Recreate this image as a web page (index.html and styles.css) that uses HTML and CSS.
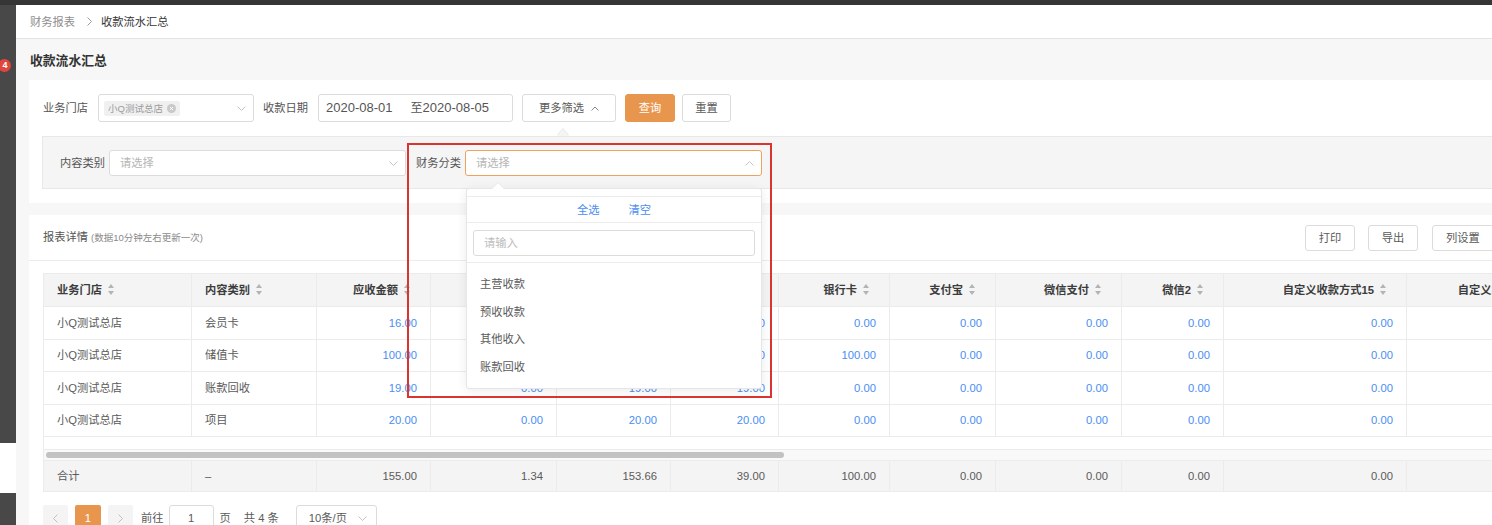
FILE: index.html
```html
<!DOCTYPE html>
<html lang="zh-CN">
<head>
<meta charset="utf-8">
<title>收款流水汇总</title>
<link rel="stylesheet" href="styles.css">
</head>
<body>
<div class="topbar"></div>
<div class="layout">
  <aside class="sidebar">
    <div class="side-dark"><span class="badge">4</span></div>
    <div class="side-gap"></div>
    <div class="side-dark side-bottom"></div>
  </aside>
  <main class="main">
    <nav class="breadcrumb">
      <span class="crumb">财务报表</span>
      <svg class="crumb-sep" width="5" height="9" viewBox="0 0 5 9"><path d="M0.5 0.5L4.5 4.5L0.5 8.5" fill="none" stroke="#9a9a9a" stroke-width="1"/></svg>
      <span class="crumb current">收款流水汇总</span>
    </nav>
    <div class="page">
      <h1 class="page-title">收款流水汇总</h1>

      <section class="filter-card">
        <div class="filter-row">
          <span class="field-label">业务门店</span>
          <div class="select store-select">
            <span class="tag">小Q测试总店<svg class="tag-close" width="9" height="9" viewBox="0 0 9 9"><circle cx="4.5" cy="4.5" r="4.5" fill="#c9c9c9"/><path d="M3 3L6 6M6 3L3 6" stroke="#fff" stroke-width="1"/></svg></span>
            <svg class="sel-arrow" width="9" height="5" viewBox="0 0 9 5"><path d="M0.5 0.5L4.5 4.5L8.5 0.5" fill="none" stroke="#c4c4c4" stroke-width="1"/></svg>
          </div>
          <span class="field-label gap-left">收款日期</span>
          <div class="date-range"><span>2020-08-01</span><span class="to">至</span><span>2020-08-05</span></div>
          <button class="btn more-btn">更多筛选<svg width="8" height="5" viewBox="0 0 8 5"><path d="M0.5 4.5L4 1L7.5 4.5" fill="none" stroke="#8a8a8a" stroke-width="1"/></svg></button>
          <button class="btn btn-primary">查询</button>
          <button class="btn btn-reset">重置</button>
        </div>
        <div class="more-panel">
          <div class="field">
            <span class="field-label small">内容类别</span>
            <div class="select wide"><span class="placeholder">请选择</span>
              <svg class="sel-arrow" width="9" height="5" viewBox="0 0 9 5"><path d="M0.5 0.5L4.5 4.5L8.5 0.5" fill="none" stroke="#c4c4c4" stroke-width="1"/></svg>
            </div>
          </div>
          <div class="field field-fin">
            <span class="field-label small">财务分类</span>
            <div class="select wide focused"><span class="placeholder">请选择</span>
              <svg class="sel-arrow" width="9" height="5" viewBox="0 0 9 5"><path d="M0.5 4.5L4.5 0.5L8.5 4.5" fill="none" stroke="#c4c4c4" stroke-width="1"/></svg>
              <div class="dropdown">
                <div class="dd-actions"><span>全选</span><span>清空</span></div>
                <div class="dd-search"><div class="dd-input">请输入</div></div>
                <ul class="dd-list">
                  <li>主营收款</li>
                  <li>预收收款</li>
                  <li>其他收入</li>
                  <li>账款回收</li>
                </ul>
              </div>
            </div>
          </div>
        </div>
      </section>

      <section class="report-card">
        <header class="report-head">
          <div class="report-title">报表详情<span class="note">(数据10分钟左右更新一次)</span></div>
          <div class="report-actions">
            <button class="btn btn-sm">打印</button>
            <button class="btn btn-sm">导出</button>
            <button class="btn btn-sm btn-cols">列设置</button>
          </div>
        </header>
        <div class="table-area">
          <div class="table-wrap">
            <table class="grid">
              <colgroup>
                <col class="c1"><col class="c2"><col class="c3"><col class="c4"><col class="c5"><col class="c6"><col class="c7"><col class="c8"><col class="c9"><col class="c10"><col class="c11"><col class="c12"><col class="cx"><col class="cx"><col class="cx"><col class="cx">
              </colgroup>
              <thead>
                <tr>
                  <th class="left">业务门店<span class="sort"></span></th>
                  <th class="left">内容类别<span class="sort"></span></th>
                  <th>应收金额<span class="sort"></span></th>
                  <th>优惠金额<span class="sort"></span></th>
                  <th>实收金额<span class="sort"></span></th>
                  <th>现金<span class="sort"></span></th>
                  <th>银行卡<span class="sort"></span></th>
                  <th>支付宝<span class="sort"></span></th>
                  <th>微信支付<span class="sort"></span></th>
                  <th>微信2<span class="sort"></span></th>
                  <th>自定义收款方式15<span class="sort"></span></th>
                  <th>自定义收款方式16<span class="sort"></span></th>
                  <th>自定义收款方式17<span class="sort"></span></th>
                  <th>自定义收款方式18<span class="sort"></span></th>
                  <th>挂账<span class="sort"></span></th>
                  <th>其他<span class="sort"></span></th>
                </tr>
              </thead>
              <tbody>
                <tr>
                  <td>小Q测试总店</td><td>会员卡</td>
                  <td class="num">16.00</td><td class="num">1.34</td><td class="num">14.66</td><td class="num">0.00</td>
                  <td class="num">0.00</td><td class="num">0.00</td><td class="num">0.00</td><td class="num">0.00</td><td class="num">0.00</td><td class="num">0.00</td>
                  <td class="num">0.00</td><td class="num">0.00</td><td class="num">0.00</td><td class="num">0.00</td>
                </tr>
                <tr>
                  <td>小Q测试总店</td><td>储值卡</td>
                  <td class="num">100.00</td><td class="num">0.00</td><td class="num">100.00</td><td class="num">0.00</td>
                  <td class="num">100.00</td><td class="num">0.00</td><td class="num">0.00</td><td class="num">0.00</td><td class="num">0.00</td><td class="num">0.00</td>
                  <td class="num">0.00</td><td class="num">0.00</td><td class="num">0.00</td><td class="num">0.00</td>
                </tr>
                <tr>
                  <td>小Q测试总店</td><td>账款回收</td>
                  <td class="num">19.00</td><td class="num">0.00</td><td class="num">19.00</td><td class="num">19.00</td>
                  <td class="num">0.00</td><td class="num">0.00</td><td class="num">0.00</td><td class="num">0.00</td><td class="num">0.00</td><td class="num">0.00</td>
                  <td class="num">0.00</td><td class="num">0.00</td><td class="num">0.00</td><td class="num">0.00</td>
                </tr>
                <tr>
                  <td>小Q测试总店</td><td>项目</td>
                  <td class="num">20.00</td><td class="num">0.00</td><td class="num">20.00</td><td class="num">20.00</td>
                  <td class="num">0.00</td><td class="num">0.00</td><td class="num">0.00</td><td class="num">0.00</td><td class="num">0.00</td><td class="num">0.00</td>
                  <td class="num">0.00</td><td class="num">0.00</td><td class="num">0.00</td><td class="num">0.00</td>
                </tr>
              </tbody>
            </table>
            <div class="body-space"></div>
            <div class="hscroll"><div class="hscroll-thumb"></div></div>
            <table class="grid foot">
              <colgroup>
                <col class="c1"><col class="c2"><col class="c3"><col class="c4"><col class="c5"><col class="c6"><col class="c7"><col class="c8"><col class="c9"><col class="c10"><col class="c11"><col class="c12"><col class="cx"><col class="cx"><col class="cx"><col class="cx">
              </colgroup>
              <tbody>
                <tr>
                  <td>合计</td><td>–</td>
                  <td class="num">155.00</td><td class="num">1.34</td><td class="num">153.66</td><td class="num">39.00</td>
                  <td class="num">100.00</td><td class="num">0.00</td><td class="num">0.00</td><td class="num">0.00</td><td class="num">0.00</td><td class="num">0.00</td>
                  <td class="num">0.00</td><td class="num">0.00</td><td class="num">0.00</td><td class="num">0.00</td>
                </tr>
              </tbody>
            </table>
          </div>
          <div class="pager">
            <button class="pg-btn"><svg width="5" height="9" viewBox="0 0 5 9"><path d="M4.5 0.5L0.5 4.5L4.5 8.5" fill="none" stroke="#c0c0c0" stroke-width="1"/></svg></button>
            <button class="pg-btn active">1</button>
            <button class="pg-btn"><svg width="5" height="9" viewBox="0 0 5 9"><path d="M0.5 0.5L4.5 4.5L0.5 8.5" fill="none" stroke="#c0c0c0" stroke-width="1"/></svg></button>
            <span class="pg-text goto">前往</span>
            <div class="pg-input">1</div>
            <span class="pg-text page-unit">页</span>
            <span class="pg-text total">共 4 条</span>
            <div class="pg-size">10条/页<svg width="9" height="5" viewBox="0 0 9 5"><path d="M0.5 0.5L4.5 4.5L8.5 0.5" fill="none" stroke="#c4c4c4" stroke-width="1"/></svg></div>
          </div>
        </div>
      </section>
    </div>
  </main>
</div>
<div class="annotation"></div>
</body>
</html>
```

FILE: styles.css
```css
* { box-sizing: border-box; margin: 0; padding: 0; }
html, body { width: 1492px; height: 525px; overflow: hidden; }
body {
  font-family: "Liberation Sans", "Noto Sans CJK SC", sans-serif;
  font-size: 11.25px;
  color: #5a5a5a;
  background: #f7f7f7;
  position: relative;
}
button { font-family: inherit; font-size: 11.25px; color: #5a5a5a; background: #fff; cursor: pointer; }
ul { list-style: none; }

.topbar { height: 5px; background: #363636; }
.layout { display: flex; width: 1521px; height: 520px; }

/* sidebar */
.sidebar { width: 16px; flex: none; display: flex; flex-direction: column; }
.side-dark { background: #484848; height: 438px; position: relative; }
.side-gap { height: 50px; background: #fff; }
.side-bottom { flex: 1; }
.badge {
  position: absolute; left: -2px; top: 54px;
  width: 13px; height: 13px; border-radius: 50%;
  background: #e0463b; color: #fff;
  font-size: 9px; font-weight: bold; line-height: 13px; text-align: center;
  font-family: "Liberation Sans", sans-serif;
  padding-left: 1px;
}

/* main */
.main { width: 1505px; flex: none; }
.breadcrumb {
  height: 34px; background: #fff; border-bottom: 1px solid #e3e3e3;
  display: flex; align-items: center; padding-left: 14px;
  line-height: 14px;
}
.crumb { color: #8e8e8e; }
.crumb.current { color: #333; }
.crumb-sep { margin: 0 9px 0 12px; }

.page { padding: 0 13px; }
.page-title {
  font-size: 12.8px; font-weight: 600; color: #333;
  height: 41px; padding-top: 2px; line-height: 39px; padding-left: 1px;
}

/* filter card */
.filter-card { background: #fff; padding: 14px 0 14px 14px; }
.filter-row { display: flex; align-items: center; height: 28px; }
.field-label { color: #555; margin-right: 10px; white-space: nowrap; line-height: 14px; }
.field-label.gap-left { margin-left: 9px; }
.field-label.small { margin-right: 4px; }

.select {
  position: relative;
  display: flex; align-items: center;
  height: 28px; border: 1px solid #dcdcdc; border-radius: 3px; background: #fff;
  padding: 0 7px 0 5px;
}
.sel-arrow { margin-left: auto; flex: none; }
.store-select { width: 156px; }
.tag {
  display: flex; align-items: center;
  height: 15px; padding: 0 4px; background: #f0f0f0; border-radius: 2px;
  color: #9b9b9b; font-size: 9.5px; line-height: 15px; white-space: nowrap;
}
.tag-close { margin-left: 4px; }

.date-range {
  width: 195px; height: 28px; border: 1px solid #dcdcdc; border-radius: 3px;
  display: flex; align-items: center; padding-left: 7px;
  font-size: 13px; color: #555; line-height: 16px;
}
.date-range .to { margin-left: 18px; font-size: 12px; }

.btn {
  height: 28px; border: 1px solid #dcdcdc; border-radius: 3px;
  display: inline-flex; align-items: center; justify-content: center;
  line-height: 14px;
}
.more-btn { width: 94px; margin-left: 9px; gap: 7px; position: relative; }
.more-btn::before, .more-btn::after {
  content: ""; position: absolute; left: 34px; width: 0; height: 0;
  border-left: 6px solid transparent; border-right: 6px solid transparent;
  z-index: 3;
}
.more-btn::before { top: calc(100% + 7px); border-bottom: 7px solid #e6e6e6; }
.more-btn::after { top: calc(100% + 8px); border-bottom: 7px solid #f5f5f5; }
.btn-primary { width: 50px; margin-left: 9px; background: #e8964d; border-color: #e8964d; color: #fff; }
.btn-reset { width: 49px; margin-left: 7px; }

.more-panel {
  margin-top: 14px; margin-left: -1px;
  background: #f5f5f5; border: 1px solid #e8e8e8; border-right: none;
  padding: 13px 17px 12px;
  display: flex; align-items: center;
  position: relative; z-index: 1;
}
.field { display: flex; align-items: center; }
.field-fin { margin-left: 10px; }
.select.wide { width: 297px; height: 26px; padding: 0 7px 0 10px; }
.select.focused { border-color: #eda35f; }
.placeholder { color: #b6b6b6; line-height: 14px; }

/* dropdown */
.dropdown {
  position: absolute; left: 0; top: calc(100% + 13px);
  width: 296px; background: #fff;
  border: 1px solid #e6e6e6; border-radius: 3px;
  box-shadow: 0 2px 12px rgba(0,0,0,0.08);
  padding-top: 7px; z-index: 5;
}
.dropdown::before, .dropdown::after {
  content: ""; position: absolute; left: 25px; width: 0; height: 0;
  border-left: 6px solid transparent; border-right: 6px solid transparent;
}
.dropdown::before { top: -7px; border-bottom: 6px solid #e6e6e6; }
.dropdown::after { top: -6px; border-bottom: 6px solid #fff; }
.dd-actions {
  height: 27px; border-top: 1px solid #ececec; border-bottom: 1px solid #ececec;
  display: flex; align-items: center; justify-content: center; gap: 29px;
  color: #4a8ef3; line-height: 14px;
}
.dd-search { padding: 7px 6px 6px; border-bottom: 1px solid #ececec; }
.dd-input {
  height: 26px; border: 1px solid #dcdcdc; border-radius: 3px;
  padding-left: 10px; color: #bdbdbd; line-height: 24px;
}
.dd-list { padding: 8px 0 6px; }
.dd-list li { height: 27.7px; line-height: 27.7px; padding-left: 13px; color: #5a5a5a; }

/* report card */
.report-card { background: #fff; margin-top: 12px; height: 330px; }
.report-head {
  height: 46px; padding: 0 14px; border-bottom: 1px solid #ececec;
  display: flex; align-items: center; justify-content: space-between;
}
.report-title { color: #555; line-height: 14px; }
.note { font-size: 9.5px; color: #8a8a8a; margin-left: 3px; }
.report-actions { display: flex; gap: 13px; }
.btn-sm { height: 26px; width: 50px; }
.btn-cols { width: 62px; margin-left: 1px; }

.table-area { padding: 12px 14px 0; }
.table-wrap {
  width: 1451px; overflow: hidden;
  border-left: 1px solid #ebebeb; border-top: 1px solid #ebebeb;
}
.grid { width: 2866px; table-layout: fixed; border-collapse: separate; border-spacing: 0; }
.c1 { width: 148px; } .c2 { width: 125px; } .c3 { width: 114px; } .c4 { width: 126px; }
.c5 { width: 114px; } .c6 { width: 108px; } .c7 { width: 111px; } .c8 { width: 106px; }
.c9 { width: 126px; } .c10 { width: 102px; } .c11 { width: 183px; } .c12 { width: 175px; }
.cx { width: 332px; }

.grid th, .grid td {
  border-right: 1px solid #ebebeb; border-bottom: 1px solid #ebebeb;
  white-space: nowrap; overflow: hidden;
}
.grid th {
  height: 33px; background: #f4f4f4; color: #3c3c3c; font-weight: 600;
  text-align: right; padding: 0 19px 0 12px; line-height: 14px;
}
.grid th.left { text-align: left; padding-left: 13px; }
.grid td { height: 32.5px; padding: 0 13px; color: #5a5a5a; line-height: 14px; }
.grid td.num { text-align: right; color: #4a8ef3; }
.sort {
  display: inline-block; position: relative; width: 7px; height: 11px;
  margin-left: 6px; vertical-align: -1px;
}
.sort::before, .sort::after {
  content: ""; position: absolute; left: 0; width: 0; height: 0;
  border-left: 3.5px solid transparent; border-right: 3.5px solid transparent;
}
.sort::before { top: 0; border-bottom: 4.5px solid #b3b3b3; }
.sort::after { top: 6.5px; border-top: 4.5px solid #b3b3b3; }

.body-space { height: 12px; background: #fff; }
.hscroll {
  height: 11px; border-top: 1px solid #ececec; background: #f9f9f9;
  padding: 2px 0 0 2px;
}
.hscroll-thumb { width: 738px; height: 6px; border-radius: 3px; background: #c2c2c2; }

.grid.foot td { height: 32px; background: #f4f4f4; border-top: 1px solid #ececec; }
.grid.foot td.num { color: #5a5a5a; }

/* pager */
.pager { display: flex; align-items: center; height: 26px; margin-top: 13px; }
.pg-btn {
  width: 25px; height: 26px; border: none; border-radius: 2px; background: #f4f4f4;
  display: inline-flex; align-items: center; justify-content: center;
  margin-right: 7px; color: #fff; line-height: 14px;
}
.pg-btn.active { width: 26px; background: #e8964d; }
.pg-text { color: #5a5a5a; line-height: 14px; white-space: nowrap; }
.goto { margin-left: 1px; }
.pg-input {
  width: 45px; height: 26px; margin-left: 5px; border: 1px solid #dcdcdc; border-radius: 3px;
  text-align: center; line-height: 24px; color: #5a5a5a;
}
.page-unit { margin-left: 6px; }
.total { margin-left: 13px; }
.pg-size {
  width: 81px; height: 26px; margin-left: 17px; border: 1px solid #dcdcdc; border-radius: 3px;
  display: flex; align-items: center; padding: 0 9px 0 12px; line-height: 24px;
  justify-content: space-between;
}

/* annotation box */
.annotation {
  position: absolute; left: 407px; top: 143px; width: 365px; height: 255px;
  border: 2px solid #d9342f; z-index: 10; pointer-events: none;
}
```
